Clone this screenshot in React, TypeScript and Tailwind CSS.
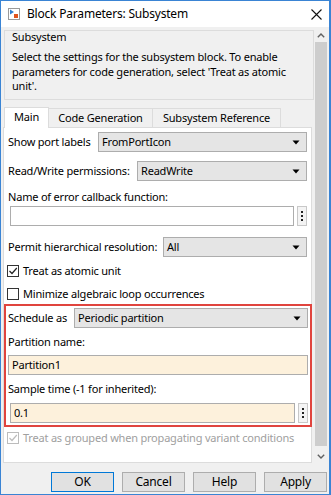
import React from "react";

const Caret = () => (
  <svg width="8" height="5" viewBox="0 0 8 5" className="shrink-0">
    <path d="M0.5 0.5 L7.5 0.5 L4 4.5 Z" fill="#000" />
  </svg>
);

const Dropdown = ({ value, className = "" }: { value: string; className?: string }) => (
  <div
    className={
      "h-[20px] flex items-center justify-between border border-[#adadad] bg-[#e5e5e5] pl-[3px] pr-[6px] " +
      className
    }
  >
    <span>{value}</span>
    <Caret />
  </div>
);

const Dots = () => (
  <div className="w-[10px] h-[20px] border border-[#c8c8c8] bg-[#f4f4f4] flex flex-col items-center justify-center gap-[2px] shrink-0">
    <div className="w-[2px] h-[2px] bg-[#222]" />
    <div className="w-[2px] h-[2px] bg-[#222]" />
    <div className="w-[2px] h-[2px] bg-[#222]" />
  </div>
);

const Check = ({ checked, disabled }: { checked: boolean; disabled?: boolean }) => (
  <div
    className={
      "w-[12px] h-[12px] border flex items-center justify-center shrink-0 " +
      (disabled ? "border-[#bcbcbc] bg-white" : "border-[#333] bg-white")
    }
  >
    {checked && (
      <svg width="10" height="10" viewBox="0 0 10 10">
        <path
          d="M1.5 5 L4 7.5 L8.8 2"
          fill="none"
          stroke={disabled ? "#bcbcbc" : "#222"}
          strokeWidth="1.2"
        />
      </svg>
    )}
  </div>
);

export default function App() {
  return (
    <div className="w-[331px] h-[495px] flex flex-col border border-r-2 border-[#3a84d4] bg-[#f0f0f0] overflow-hidden font-['Noto_Sans',sans-serif] text-[11px] tracking-[-0.2px] text-black">
      {/* Title bar */}
      <div className="h-[26px] bg-white flex items-center shrink-0">
        <svg width="12" height="12" viewBox="0 0 12 12" className="ml-[7px]">
          <rect x="0.5" y="0.5" width="11" height="11" fill="#fff" stroke="#9a9a9a" />
          <path d="M2 1.5 L6 4 L2 6.5 Z" fill="#2f7fd0" />
          <rect x="6" y="6" width="4" height="4" fill="#e0531d" />
        </svg>
        <span className="ml-[7px] text-[12px]">Block Parameters: Subsystem</span>
        <svg width="11" height="11" viewBox="0 0 11 11" className="ml-auto mr-[7px]">
          <path d="M0.5 0.5 L10.5 10.5 M10.5 0.5 L0.5 10.5" stroke="#111" strokeWidth="1.1" />
        </svg>
      </div>

      {/* Body */}
      <div className="h-[436px] flex shrink-0">
        <div className="w-[313px] flex flex-col pl-[2px]">
          {/* group box */}
          <div className="mt-[3px] ml-[1px] w-[310px] h-[70px] border border-[#dcdcdc] pl-[7px] shrink-0">
            <div className="h-[12px] leading-[12px]">Subsystem</div>
            <div className="mt-[7px] leading-[14.5px]">
              Select the settings for the subsystem block. To enable
              <br />
              parameters for code generation, select 'Treat as atomic
              <br />
              unit'.
            </div>
          </div>

          {/* tabs */}
          <div className="mt-[7px] h-[20px] flex items-end shrink-0">
            <div className="ml-[1px] w-[45px] h-[21px] -mb-[1px] border border-b-0 border-[#dcdcdc] bg-white relative z-10 flex items-center justify-center pb-[1px]">
              Main
            </div>
            <div className="w-[104px] h-[19px] border border-l-0 border-b-0 border-[#dcdcdc] flex items-center justify-center">
              Code Generation
            </div>
            <div className="w-[128px] h-[19px] border border-l-0 border-b-0 border-[#dcdcdc] flex items-center justify-center">
              Subsystem Reference
            </div>
          </div>

          {/* panel */}
          <div className="w-[309px] flex-1 border border-[#dcdcdc] bg-white flex flex-col">
            <div className="px-[4px] mt-[4px] flex items-center h-[20px]">
              <span className="w-[90px]">Show port labels</span>
              <Dropdown value="FromPortIcon" className="flex-1" />
            </div>
            <div className="px-[4px] mt-[9px] flex items-center h-[20px]">
              <span className="w-[129px]">Read/Write permissions:</span>
              <Dropdown value="ReadWrite" className="flex-1" />
            </div>
            <div className="px-[4px] mt-[8px] h-[16px] leading-[16px]">Name of error callback function:</div>
            <div className="px-[4px] mt-[1px] flex items-center h-[20px]">
              <div className="ml-[2px] flex-1 h-[20px] border border-[#adadad] bg-white" />
              <div className="ml-[3px]">
                <Dots />
              </div>
            </div>
            <div className="px-[4px] mt-[11px] flex items-center h-[20px]">
              <span className="w-[155px]">Permit hierarchical resolution:</span>
              <Dropdown value="All" className="flex-1" />
            </div>
            <div className="pl-[3px] mt-[6px] flex items-center h-[16px] gap-[4px]">
              <Check checked />
              <span>Treat as atomic unit</span>
            </div>
            <div className="pl-[3px] mt-[7px] flex items-center h-[16px] gap-[4px]">
              <Check checked={false} />
              <span>Minimize algebraic loop occurrences</span>
            </div>

            {/* highlighted */}
            <div className="mt-[2px] border-2 border-[#e0443e] pl-[2px] pr-[2px] pt-[2px] pb-[2px] -mr-[1px]">
              <div className="flex items-center h-[20px]">
                <span className="w-[66px]">Schedule as</span>
                <Dropdown value="Periodic partition" className="flex-1" />
              </div>
              <div className="mt-[6px] h-[16px] leading-[16px]">Partition name:</div>
              <div className="mt-[5px] h-[20px] border border-[#adadad] bg-[#fdf1dc] flex items-center pl-[3px]">
                Partition1
              </div>
              <div className="mt-[6px] h-[16px] leading-[16px]">Sample time (-1 for inherited):</div>
              <div className="mt-[6px] flex items-center h-[20px]">
                <div className="ml-[2px] flex-1 h-[20px] border border-[#adadad] bg-[#fdf1dc] flex items-center pl-[3px]">
                  0.1
                </div>
                <div className="ml-[3px]">
                  <Dots />
                </div>
              </div>
            </div>

            <div className="pl-[3px] mt-[3px] flex items-center h-[16px] gap-[4px] text-[#a0a0a0]">
              <Check checked disabled />
              <span>Treat as grouped when propagating variant conditions</span>
            </div>
          </div>
        </div>

        {/* scrollbar */}
        <div className="ml-[1px] w-[12px] mt-[1px] flex flex-col">
          <div className="h-[14px] flex items-center justify-center">
            <svg width="8" height="5" viewBox="0 0 8 5">
              <path d="M0.8 4.2 L4 1 L7.2 4.2" fill="none" stroke="#606060" strokeWidth="1.4" />
            </svg>
          </div>
          <div className="h-[404px] bg-[#cdcdcd]" />
          <div className="flex-1" />
          <div className="h-[14px] flex items-center justify-center">
            <svg width="8" height="5" viewBox="0 0 8 5">
              <path d="M0.8 0.8 L4 4 L7.2 0.8" fill="none" stroke="#606060" strokeWidth="1.4" />
            </svg>
          </div>
        </div>
      </div>

      {/* buttons */}
      <div className="flex-1 flex justify-end items-start pt-[9px] pr-[2px] gap-[8px] text-[12px]">
        <div className="w-[63px] h-[20px] border border-[#0078d7] bg-[#e1e1e1] flex items-center justify-center">OK</div>
        <div className="w-[63px] h-[20px] border border-[#adadad] bg-[#e1e1e1] flex items-center justify-center">Cancel</div>
        <div className="w-[63px] h-[20px] border border-[#adadad] bg-[#e1e1e1] flex items-center justify-center">Help</div>
        <div className="w-[63px] h-[20px] border border-[#adadad] bg-[#e1e1e1] flex items-center justify-center">Apply</div>
      </div>
    </div>
  );
}
